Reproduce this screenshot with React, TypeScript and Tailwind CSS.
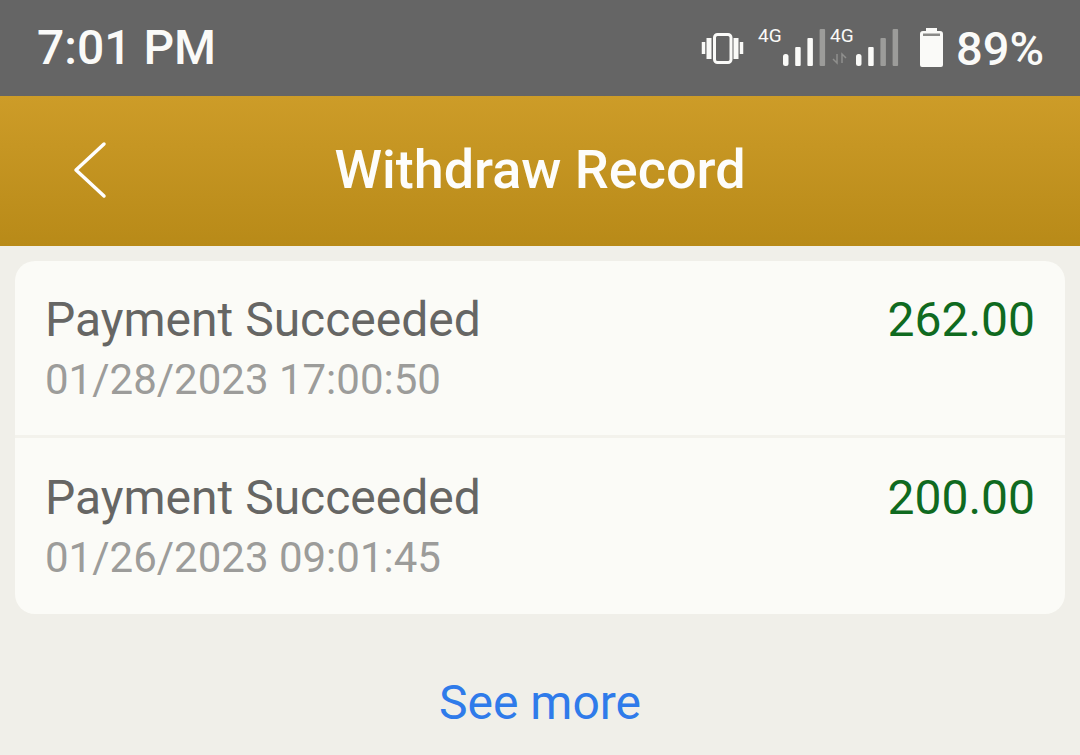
const records = [
  { date: "01/28/2023 17:00:50", amount: "262.00" },
  { date: "01/26/2023 09:01:45", amount: "200.00" },
];

const barHeights = [12, 19, 28, 37];

const SignalBars = ({ x, lit }: { x: number; lit: number }) => (
  <g>
    {barHeights.map((h, i) => (
      <rect
        key={h}
        x={x + i * 12.2}
        y={48 - h}
        width="5.5"
        height={h}
        rx={i === 0 ? 2.5 : 1}
        fill={i < lit ? "#fafaf8" : "#9c9c9a"}
      />
    ))}
  </g>
);

const StatusIcons = () => (
  <svg width="250" height="60" viewBox="0 0 250 60" className="shrink-0">
    <g fill="none" stroke="#fafaf8">
      <rect x="14.5" y="16.5" width="16.5" height="28" rx="3" strokeWidth="3" />
      <path d="M9 20v21M36 20v21" strokeWidth="5" />
      <path d="M3.5 24v12M41.5 24v12" strokeWidth="3.5" />
    </g>
    <SignalBars x={83} lit={3} />
    <path d="M137 36v9l-4-4" fill="none" stroke="#8f8f8d" strokeWidth="1.5" />
    <path d="M142 45v-9l4 4" fill="none" stroke="#8f8f8d" strokeWidth="1.5" />
    <SignalBars x={156} lit={2} />
    <path
      d="M226 10h11v3h3a3 3 0 0 1 3 3v31a2 2 0 0 1-2 2h-19a2 2 0 0 1-2-2V16a3 3 0 0 1 3-3h3z"
      fill="#fafaf8"
    />
    <rect x="223" y="15.5" width="17" height="2.5" fill="#8a8a88" />
    <text x="58" y="24" fontFamily="Roboto, sans-serif" fontSize="19" fill="#fafaf8">
      4G
    </text>
    <text x="130" y="24" fontFamily="Roboto, sans-serif" fontSize="19" fill="#fafaf8">
      4G
    </text>
  </svg>
);

export default function App() {
  return (
    <div className="flex h-[755px] w-[1080px] flex-col overflow-hidden bg-[#f0efe9] font-['Roboto',sans-serif]">
      <div className="flex h-24 items-center justify-between bg-[#656565] pl-[37px] pr-[36px] text-[#fafaf8]">
        <span className="text-[48px] font-medium leading-none">7:01 PM</span>
        <div className="flex items-center gap-[6px]">
          <StatusIcons />
          <span className="text-[47px] font-medium leading-none">89%</span>
        </div>
      </div>

      <div className="relative flex h-[150px] items-center justify-center bg-gradient-to-b from-[#cd9c28] to-[#b88a18] pb-[3px]">
        <svg
          width="34"
          height="58"
          viewBox="0 0 34 58"
          fill="none"
          stroke="white"
          strokeWidth="3.5"
          strokeLinecap="round"
          strokeLinejoin="round"
          className="absolute left-[73px] top-[45px]"
        >
          <path d="M31 3 L3 29 L31 55" />
        </svg>
        <h1 className="text-[54px] font-medium leading-none text-[#fdfdfb]">Withdraw Record</h1>
      </div>

      <div className="mx-[15px] mt-[15px] overflow-hidden rounded-[20px] bg-[#fbfbf7]">
        {records.map((r, i) => (
          <div
            key={r.date}
            className={`flex justify-between pl-[30px] pr-[30px] ${
              i === 0 ? "h-[177px] border-b-[3px] border-[#f3f2ec] pt-[30px]" : "h-[176px] pt-[31px]"
            }`}
          >
            <div>
              <div className="text-[48px] leading-[58px] text-[#666664]">Payment Succeeded</div>
              <div className="mt-[2px] text-[42px] leading-[58px] text-[#9c9c9a]">{r.date}</div>
            </div>
            <div className="text-[48px] leading-[58px] text-[#0f6a20]">{r.amount}</div>
          </div>
        ))}
      </div>

      <div className="mt-[60px] text-center text-[48px] leading-[58px] text-[#2f7bea]">See more</div>
    </div>
  );
}
